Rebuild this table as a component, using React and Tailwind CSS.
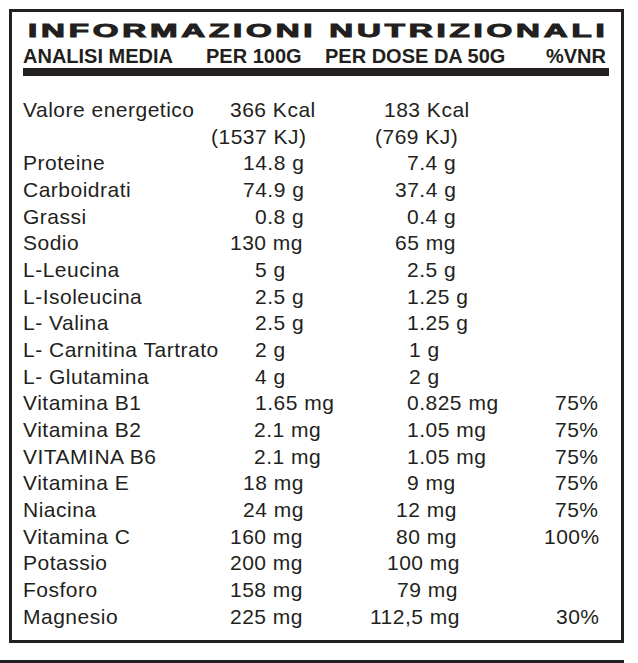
import React from 'react';

const righe = [
  ['Valore energetico', '366 Kcal', 30, '183 Kcal', 24, '', 0],
  ['', '(1537 KJ)', 11, '(769 KJ)', 15, '', 0],
  ['Proteine', '14.8 g', 43, '7.4 g', 47, '', 0],
  ['Carboidrati', '74.9 g', 43, '37.4 g', 35, '', 0],
  ['Grassi', '0.8 g', 55, '0.4 g', 47, '', 0],
  ['Sodio', '130 mg', 30, '65 mg', 35, '', 0],
  ['L-Leucina', '5 g', 55, '2.5 g', 47, '', 0],
  ['L-Isoleucina', '2.5 g', 55, '1.25 g', 47, '', 0],
  ['L- Valina', '2.5 g', 55, '1.25 g', 47, '', 0],
  ['L- Carnitina Tartrato', '2 g', 55, '1 g', 49, '', 0],
  ['L- Glutamina', '4 g', 55, '2 g', 49, '', 0],
  ['Vitamina B1', '1.65 mg', 55, '0.825 mg', 47, '75%', 25],
  ['Vitamina B2', '2.1 mg', 54, '1.05 mg', 47, '75%', 25],
  ['VITAMINA B6', '2.1 mg', 54, '1.05 mg', 47, '75%', 25],
  ['Vitamina E', '18 mg', 43, '9 mg', 47, '75%', 25],
  ['Niacina', '24 mg', 43, '12 mg', 36, '75%', 25],
  ['Vitamina C', '160 mg', 30, '80 mg', 36, '100%', 14],
  ['Potassio', '200 mg', 30, '100 mg', 27, '', 0],
  ['Fosforo', '158 mg', 30, '79 mg', 37, '', 0],
  ['Magnesio', '225 mg', 30, '112,5 mg', 10, '30%', 26],
];

export default function App() {
  return (
    <div className="w-[638px] h-[663px] bg-white text-[#231f20] font-['Liberation_Sans',Arial,sans-serif] overflow-hidden">
      <div className="pt-[9px] pl-[9px]">
        <div className="w-[615px] h-[634px] border-[3px] border-[#231f20] pl-[11px] pr-[12px] pt-[8px]">
          {/* titolo */}
          <div className="h-[22px] leading-[22px] pl-[5px] whitespace-nowrap">
            <span className="inline-block origin-left scale-x-[1.74] text-[19px] font-bold tracking-[2.2px] [-webkit-text-stroke:1px_#231f20]">
              INFORMAZIONI NUTRIZIONALI
            </span>
          </div>

          {/* intestazioni colonne */}
          <div className="flex mt-[3px] h-[22px] leading-[22px] text-[20px] font-bold whitespace-nowrap">
            <div className="w-[183px]">ANALISI MEDIA</div>
            <div className="w-[119px]">PER 100G</div>
            <div className="w-[221px]">PER DOSE DA 50G</div>
            <div>%VNR</div>
          </div>
          <div className="mt-[1px] h-[8px] bg-[#231f20]"></div>

          {/* valori */}
          <div className="mt-[21px] text-[21px] tracking-[0.5px] leading-[26.68px] whitespace-nowrap">
            {righe.map((r, i) => (
              <div key={i} className="flex h-[26.68px]">
                <div className="w-[177px]">{r[0]}</div>
                <div className="w-[160px]" style={{ paddingLeft: r[2] }}>{r[1]}</div>
                <div className="w-[170px]" style={{ paddingLeft: r[4] }}>{r[3]}</div>
                <div style={{ paddingLeft: r[6] }}>{r[5]}</div>
              </div>
            ))}
          </div>
        </div>
        <div className="mt-[17px] -ml-[9px] w-[624px] h-[3px] bg-[#231f20]"></div>
      </div>
    </div>
  );
}
